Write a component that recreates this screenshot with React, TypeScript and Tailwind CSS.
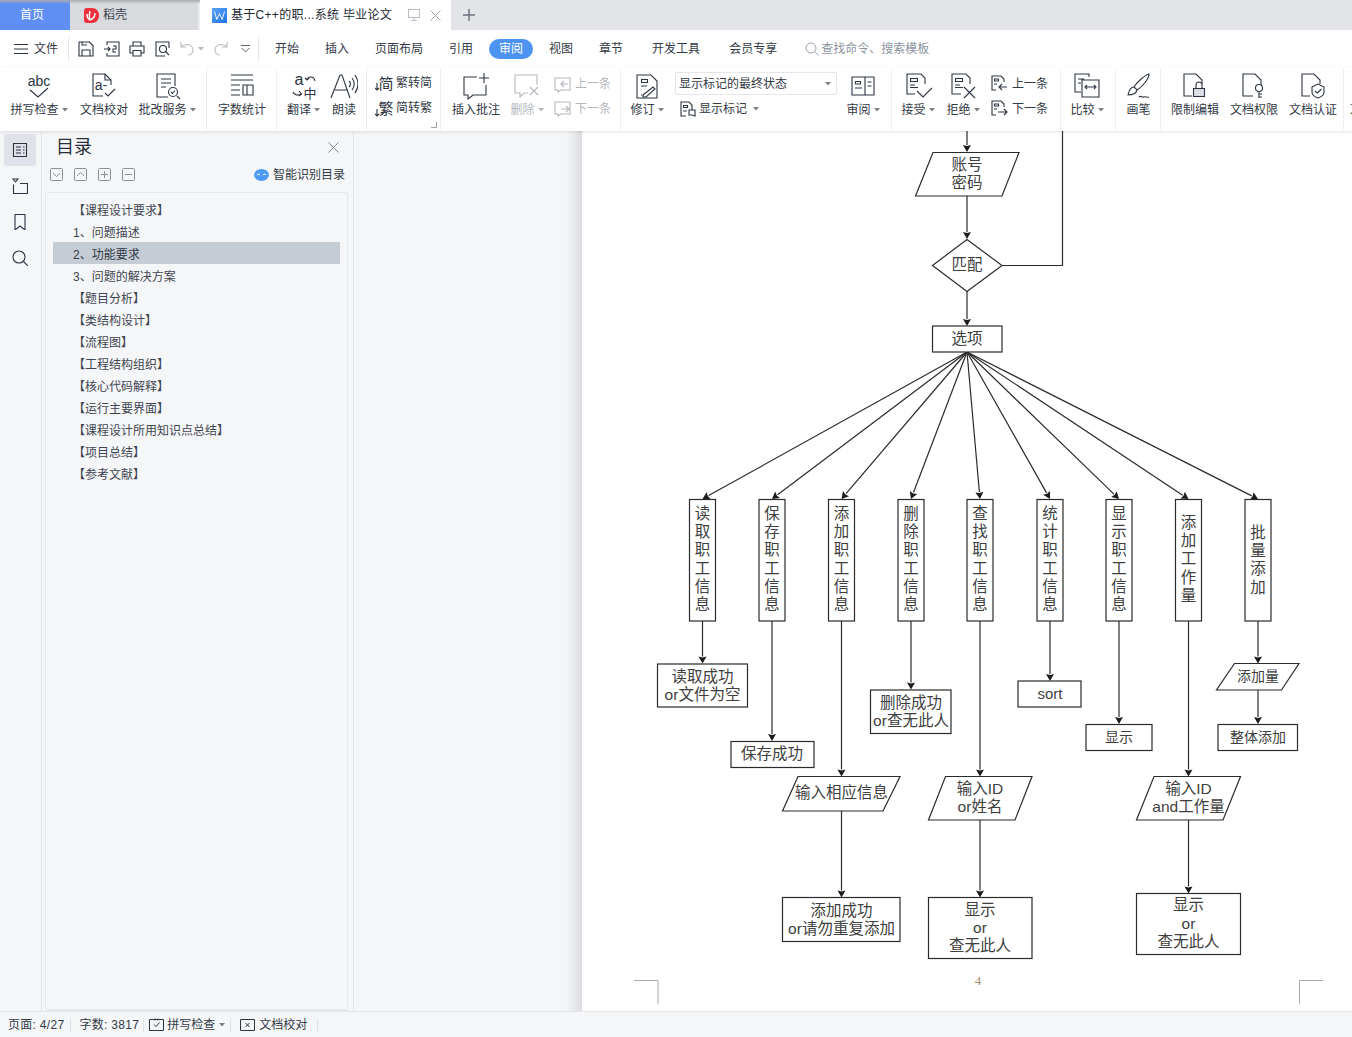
import type { ReactNode } from "react";

const INK = "#2d3442";
const MUTED = "#b4b7bd";

function Caret({ muted }: { muted?: boolean }) {
  return (
    <svg width="6" height="4" viewBox="0 0 6 4" className="ml-[3px] shrink-0">
      <path d="M0 0h6L3 3.5z" fill={muted ? MUTED : "#7a7f88"} />
    </svg>
  );
}

function Ico({ size = 28, children, color = INK }: { size?: number; children: ReactNode; color?: string }) {
  return (
    <svg width={size} height={size} viewBox={`0 0 ${size} ${size}`} fill="none" stroke={color} strokeWidth="1.1" className="block shrink-0">
      {children}
    </svg>
  );
}

// little marks that sit inside the review icons
function Marks({ x, y }: { x: number; y: number }) {
  return (
    <g transform={`translate(${x} ${y})`}>
      <rect x="0.5" y="0.5" width="7" height="3" />
      <path d="M0 7h5M0 9.5h8" />
    </g>
  );
}

function RibbonItem({ w, label, caret, muted, children }: { w: number; label: string; caret?: boolean; muted?: boolean; children: ReactNode }) {
  return (
    <div className="flex shrink-0 flex-col items-center" style={{ width: w }}>
      <div className="flex h-[28px] items-center justify-center">{children}</div>
      <div className={`mt-[1px] flex h-[18px] items-center whitespace-nowrap text-xs ${muted ? "text-[#b4b7bd]" : "text-[#333a46]"}`}>
        {label}
        {caret && <Caret muted={muted} />}
      </div>
    </div>
  );
}

function Group({ w, children, className = "" }: { w: number; children: ReactNode; className?: string }) {
  return (
    <div className={`relative flex h-[62px] shrink-0 border-r border-[#eceef0] pt-[4px] ${className}`} style={{ width: w }}>
      {children}
    </div>
  );
}

function SmallRow({ label, muted, caret, children }: { label: string; muted?: boolean; caret?: boolean; children: ReactNode }) {
  return (
    <div className={`flex h-[18px] items-center gap-[3px] whitespace-nowrap text-xs ${muted ? "text-[#b4b7bd]" : "text-[#333a46]"}`}>
      {children}
      {label}
      {caret && <Caret />}
    </div>
  );
}

function TabBar() {
  return (
    <div className="relative flex h-[30px] shrink-0 bg-[#e3e4e8] text-xs">
      <div className="flex w-[70px] items-center justify-center bg-[#5f8ff5] text-white">
        <span className="mr-[6px]">首页</span>
      </div>
      <div className="flex w-[130px] items-center border-r-2 border-[#eceded] bg-[#d9dade] pl-[14px] text-[#3d4450]">
        <svg width="15" height="15" viewBox="0 0 15 15" className="mr-[4px]">
          <path d="M0 3a3 3 0 0 1 3-3h5c4 0 7 3 7 7.500S12 15 8 15H3a3 3 0 0 1-3-3z" fill="#ee2f3c" />
          <path d="M6 3c-1 3-1 6 0 9M3 6c0 3 1 5 3 6M11 5c0 3-2 6-5 7" stroke="#fff" strokeWidth="1.5" fill="none" />
        </svg>
        稻壳
      </div>
      <div className="flex w-[251px] items-center bg-white pl-[12px] text-[#222833]">
        <svg width="15" height="15" viewBox="0 0 15 15" className="mr-[4px]">
          <defs>
            <linearGradient id="wps-w" x1="0" y1="0" x2="1" y2="1">
              <stop offset="0" stopColor="#5aa2f5" />
              <stop offset="1" stopColor="#1f74ea" />
            </linearGradient>
          </defs>
          <rect width="15" height="15" fill="url(#wps-w)" />
          <path d="M2.500 3.500l2.300 8 2.700-6 2.700 6 2.300-8" stroke="#fff" strokeWidth="0.9" fill="none" />
        </svg>
        <span className="tracking-[0.3px]">基于C++的职...系统 毕业论文</span>
        <svg width="12" height="12" viewBox="0 0 12 12" fill="none" stroke="#b8bcc3" className="ml-[16px]">
          <rect x="0.5" y="0.5" width="11" height="8" />
          <path d="M6 8.500V11M3.500 11.500h5" />
        </svg>
        <svg width="11" height="11" viewBox="0 0 11 11" fill="none" stroke="#a3a7ae" className="ml-[10px]">
          <path d="M.5.5l10 10M10.500.5l-10 10" />
        </svg>
      </div>
      <div className="ml-[12px] flex items-center">
        <svg width="12" height="12" viewBox="0 0 12 12" stroke="#6b717b" strokeWidth="1.4">
          <path d="M6 0v12M0 6h12" />
        </svg>
      </div>
      {/* window shadow that falls over the inactive tabs */}
      <div className="absolute left-0 top-0 h-[4px] w-[200px] bg-gradient-to-b from-[#a9abb2] to-transparent" />
    </div>
  );
}

function MenuRow() {
  const gray = "#b9bcc2";
  return (
    <div className="flex h-[37px] shrink-0 items-center bg-white text-xs text-[#333a46]">
      <svg width="14" height="10" viewBox="0 0 14 10" stroke={INK} className="ml-[14px]">
        <path d="M0 .5h14M0 5h14M0 9.500h14" />
      </svg>
      <span className="ml-[6px]">文件</span>
      <div className="ml-[10px] h-[24px] w-px bg-[#e4e6e9]" />
      <div className="ml-[9px] flex items-center">
        <Ico size={16}>
          <path d="M1 1h10.500L15 4.500V15H1zM4 15V9h8v6M4 1v3h5" />
        </Ico>
        <div className="ml-[10px]">
          <Ico size={16}>
            <path d="M3 4V1h12v14H3v-3M0 8h6M4 6l2 2-2 2M9 5h3v3H9v3h3" />
          </Ico>
        </div>
        <div className="ml-[9px]">
          <Ico size={16}>
            <path d="M4 5V1h8v4M4 12H1V5h14v7h-3M4 9.500h8V15H4z" />
          </Ico>
        </div>
        <div className="ml-[10px]">
          <Ico size={16}>
            <path d="M14 7V1H1v14h9" />
            <circle cx="8" cy="8" r="3.5" />
            <path d="M10.500 10.500L14 14" />
          </Ico>
        </div>
        <div className="ml-[9px]">
          <Ico size={15} color={gray}>
            <path d="M1 1v5h5M1 6c3-4 12-3 12 3 0 3-2 5-5 5" />
          </Ico>
        </div>
        <Caret muted />
        <div className="ml-[9px]">
          <Ico size={15} color={gray}>
            <path d="M14 1v5H9M14 6C11 2 2 3 2 9c0 3 2 5 5 5" />
          </Ico>
        </div>
        <svg width="9" height="8" viewBox="0 0 9 8" fill="none" stroke="#5f6570" className="ml-[13px]">
          <path d="M0 .5h9M.5 3l4 4 4-4" />
        </svg>
      </div>
      <div className="ml-[8px] h-[24px] w-px bg-[#e4e6e9]" />
      <span className="ml-[16px]">开始</span>
      <span className="ml-[26px]">插入</span>
      <span className="ml-[26px]">页面布局</span>
      <span className="ml-[26px]">引用</span>
      <span className="ml-[16px] flex h-[20px] w-[44px] items-center justify-center rounded-full bg-[#4d94f2] text-white">审阅</span>
      <span className="ml-[16px]">视图</span>
      <span className="ml-[26px]">章节</span>
      <span className="ml-[29px]">开发工具</span>
      <span className="ml-[29px]">会员专享</span>
      <svg width="14" height="14" viewBox="0 0 14 14" fill="none" stroke="#98a0ad" className="ml-[28px]">
        <circle cx="6" cy="6" r="5" />
        <path d="M9.500 9.500L13.500 13.500" />
      </svg>
      <span className="ml-[2px] text-[#8d94a1]">查找命令、搜索模板</span>
    </div>
  );
}

function Ribbon() {
  const g = MUTED;
  return (
    <div className="relative z-10 flex h-[64px] shrink-0 bg-white pt-[1px] shadow-[0_1px_3px_rgba(0,0,0,0.12)]">
      <Group w={207}>
        <RibbonItem w={78} label="拼写检查" caret>
          <Ico>
            <text x="14" y="14" textAnchor="middle" fontSize="14" fill={INK} stroke="none">abc</text>
            <path d="M5 18l8 7 10-9" />
          </Ico>
        </RibbonItem>
        <RibbonItem w={52} label="文档校对">
          <Ico>
            <path d="M21 13V8l-6-6H3v22h10" />
            <path d="M15 2v6h6" />
            <text x="11" y="18" textAnchor="middle" fontSize="14" fill={INK} stroke="none">a-</text>
            <path d="M15 21l3 3 7-7" />
          </Ico>
        </RibbonItem>
        <RibbonItem w={74} label="批改服务" caret>
          <Ico>
            <path d="M22 14V2H4v23h11" />
            <path d="M8 7h10M8 11h10M8 15h5" />
            <circle cx="20" cy="20" r="4.5" />
            <path d="M18 20l1.500 1.500 2.500-3M24 24l3 3" />
          </Ico>
        </RibbonItem>
      </Group>
      <Group w={70}>
        <RibbonItem w={70} label="字数统计">
          <Ico>
            <path d="M3 3h22M3 8h22M3 13h9M3 18h9M3 23h9M15 13h4v10h-4zM19 13h6v10h-6z" />
          </Ico>
        </RibbonItem>
      </Group>
      <Group w={90} className="pl-[4px]">
        <RibbonItem w={45} label="翻译" caret>
          <Ico>
            <text x="9" y="13" textAnchor="middle" fontSize="16" fill={INK} stroke="none">a</text>
            <path d="M17 7c2-3 7-3 8 2M15 6l2 2 2-2M3 20c1 3 5 4 8 2M9 19l2.500 3L9 24" />
            <text x="20" y="26" textAnchor="middle" fontSize="13" fill={INK} stroke="none">中</text>
          </Ico>
        </RibbonItem>
        <RibbonItem w={36} label="朗读">
          <Ico>
            <path d="M1 26L10 3h2l8 23M5 18h12M19 9c2 2 2 4 0 6M22 6c3 4 3 8 0 12M25 3c4 6 4 12 0 18" />
          </Ico>
        </RibbonItem>
      </Group>
      <Group w={74} className="flex-col pl-[8px] !pt-[2px]">
        <div className="flex h-[25px] items-center gap-[3px] text-xs text-[#333a46]">
          <Ico size={18}>
            <text x="11" y="14.5" textAnchor="middle" fontSize="15" fill={INK} stroke="none">简</text>
            <path d="M2 9v7M0 14l2 2 2-2" />
          </Ico>
          繁转简
        </div>
        <div className="flex h-[25px] items-center gap-[3px] text-xs text-[#333a46]">
          <Ico size={18}>
            <text x="11" y="14.5" textAnchor="middle" fontSize="15" fill={INK} stroke="none">繁</text>
            <path d="M2 10v7M0 15l2 2 2-2" />
          </Ico>
          简转繁
        </div>
        <svg width="6" height="6" viewBox="0 0 6 6" fill="none" stroke="#9aa0a8" className="absolute bottom-[2px] right-[3px]">
          <path d="M0 5.500h5.500V0" />
        </svg>
      </Group>
      <Group w={180}>
        <RibbonItem w={70} label="插入批注">
          <Ico>
            <path d="M15 5H2v18h4v4l5-4h13V13M22 1v10M17 6h10" />
          </Ico>
        </RibbonItem>
        <RibbonItem w={32} label="删除" caret muted>
          <Ico color={g}>
            <path d="M24 13V3H2v18h5v4l4-4h4M17 15l8 8M25 15l-8 8" />
          </Ico>
        </RibbonItem>
        <div className="ml-[11px] flex flex-col gap-[7px] pt-[3px]">
          <SmallRow label="上一条" muted>
            <Ico size={18} color={g}>
              <path d="M1 3h15v12H7l-3 2v-2H1zM14 9H7M10 6L7 9l3 3" />
            </Ico>
          </SmallRow>
          <SmallRow label="下一条" muted>
            <Ico size={18} color={g}>
              <path d="M1 2h15v12H7l-3 2v-2H1zM7 9h8M12 6l3 3-3 3" />
            </Ico>
          </SmallRow>
        </div>
      </Group>
      <Group w={271}>
        <RibbonItem w={52} label="修订" caret>
          <Ico>
            <path d="M4 3h14l6 6v17H4z" />
            <rect x="8.5" y="7.5" width="6" height="3" />
            <path d="M8 14h6M10 23l10-8 2 2-9 8h-3zM8 23h1" />
          </Ico>
        </RibbonItem>
        <div className="ml-[2px] flex w-[162px] flex-col">
          <div className="flex h-[23px] items-center justify-between rounded-[2px] border border-[#e5e7ea] pl-[3px] pr-[5px] text-xs text-[#333a46]">
            显示标记的最终状态
            <Caret />
          </div>
          <div className="mt-[5px] pl-[5px]">
            <SmallRow label="显示标记" caret>
              <Ico size={16}>
                <path d="M12 9V4L9 1H1v14h5M3.500 4.500h4v2h-4zM3 10h4M9 9h6v6l-3-1H9z" />
              </Ico>
            </SmallRow>
          </div>
        </div>
        <RibbonItem w={52} label="审阅" caret>
          <Ico>
            <path d="M3 5h22v18H3zM16 5v18M6.500 9.500h5v2.500h-5zM6 16h7M18.500 10h4M18.500 14h4" />
          </Ico>
        </RibbonItem>
      </Group>
      <Group w={169}>
        <RibbonItem w={52} label="接受" caret>
          <Ico>
            <path d="M21 12V6l-4-4H3v20h8" />
            <Marks x={6} y={6} />
            <path d="M13 19l6 6 9-9" />
          </Ico>
        </RibbonItem>
        <RibbonItem w={38} label="拒绝" caret>
          <Ico>
            <path d="M21 12V6l-4-4H3v20h9" />
            <Marks x={6} y={6} />
            <path d="M15 15l11 11M26 15L15 26" />
          </Ico>
        </RibbonItem>
        <div className="ml-[9px] flex flex-col gap-[7px] pt-[3px]">
          <SmallRow label="上一条">
            <Ico size={18}>
              <path d="M13 7V4l-3-3H1v14h4M3.500 4h4v2h-4zM3 9h3M16 12H8M11 9l-3 3 3 3" />
            </Ico>
          </SmallRow>
          <SmallRow label="下一条">
            <Ico size={18}>
              <path d="M13 7V4l-3-3H1v14h4M3.500 4h4v2h-4zM3 9h3M7 12h9M13 9l3 3-3 3" />
            </Ico>
          </SmallRow>
        </div>
      </Group>
      <Group w={55}>
        <RibbonItem w={52} label="比较" caret>
          <Ico>
            <path d="M16 5V2H2v18h6M5 7h6M5 11h3M9 8h17v17H9zM13 15h9M21 13l2 2-2 2M14 13l-2 2 2 2" />
          </Ico>
        </RibbonItem>
      </Group>
      <Group w={45}>
        <RibbonItem w={45} label="画笔">
          <Ico>
            <path d="M24 2c-4 1-12 8-15 13l3 3c5-3 12-11 12-16zM9 15c-3 0-5 3-6 8 3 0 8-1 9-5M14 25c2-2 3 1 5 0s3 1 5 0" />
          </Ico>
        </RibbonItem>
      </Group>
      <Group w={183} className="pl-[4px]">
        <RibbonItem w={60} label="限制编辑">
          <Ico>
            <path d="M11 24H3V2h12l6 6v4" />
            <rect x="12.5" y="16.5" width="11" height="8" fill="#dcdfe3" />
            <path d="M15 16v-3a3 3 0 0 1 6 0v3" />
          </Ico>
        </RibbonItem>
        <RibbonItem w={58} label="文档权限">
          <Ico>
            <path d="M13 24H3V2h12l6 6v5" />
            <circle cx="19" cy="16" r="3.5" />
            <path d="M19 19.500V26M19 22h3M19 25h3" />
          </Ico>
        </RibbonItem>
        <RibbonItem w={60} label="文档认证">
          <Ico>
            <path d="M11 24H3V2h12l6 6v4" />
            <path d="M13 15l6-3 6 3v5c0 3-3 5-6 6-3-1-6-3-6-6zM16 19l2.500 2 4-4" />
          </Ico>
        </RibbonItem>
      </Group>
      <div className="ml-[6px] pt-[33px] text-xs text-[#333a46]">文</div>
    </div>
  );
}

const tocItems = [
  "【课程设计要求】",
  "1、问题描述",
  "2、功能要求",
  "3、问题的解决方案",
  "【题目分析】",
  "【类结构设计】",
  "【流程图】",
  "【工程结构组织】",
  "【核心代码解释】",
  "【运行主要界面】",
  "【课程设计所用知识点总结】",
  "【项目总结】",
  "【参考文献】",
];

function Rail() {
  return (
    <div className="flex w-[42px] shrink-0 flex-col items-center gap-[4px] border-r border-[#e3e5e9] pr-px pt-[3px]">
      <div className="flex h-[32px] w-[32px] items-center justify-center rounded-[2px] bg-[#dfe2e8]">
        <Ico size={16}>
          <path d="M1.500 1.500h13v13h-13zM4 5h5M4 8h5M4 11h5M11 5h1.500M11 8h1.500M11 11h1.500" />
        </Ico>
      </div>
      <div className="flex h-[32px] w-[32px] items-center justify-center">
        <Ico size={16}>
          <path d="M1 1h5L3.500 4zM1.500 6.500v9h14v-10H8" />
        </Ico>
      </div>
      <div className="flex h-[32px] w-[32px] items-center justify-center">
        <Ico size={16}>
          <path d="M3 .5h10V16l-5-4-5 4z" />
        </Ico>
      </div>
      <div className="flex h-[32px] w-[32px] items-center justify-center">
        <Ico size={16}>
          <circle cx="7" cy="7" r="6" />
          <path d="M11.500 11.500L16 16" />
        </Ico>
      </div>
    </div>
  );
}

function TinyBox({ d }: { d: string }) {
  return (
    <svg width="13" height="13" viewBox="0 0 13 13" fill="none" stroke="#8b9098">
      <rect x=".5" y=".5" width="12" height="12" rx="1" />
      <path d={d} />
    </svg>
  );
}

function Sidebar() {
  return (
    <div className="flex w-[312px] shrink-0 flex-col border-r border-[#e3e5e9] pl-[3px] pr-[5px]">
      <div className="relative flex h-[33px] items-center pl-[11px] text-[18px] text-[#2a303b]">
        目录
        <svg width="11" height="11" viewBox="0 0 11 11" fill="none" stroke="#82878f" className="absolute right-[9px] top-[11px]">
          <path d="M.5.5l10 10M10.500.5l-10 10" />
        </svg>
      </div>
      <div className="flex h-[21px] items-center pl-[5px] pr-[3px]">
        <div className="flex gap-[11px]">
          <TinyBox d="M3 5l3.500 3.500L10 5" />
          <TinyBox d="M3 8l3.500-3.500L10 8" />
          <TinyBox d="M3 6.500h7M6.500 3v7" />
          <TinyBox d="M3 6.500h7" />
        </div>
        <div className="ml-auto flex items-center text-xs text-[#333a46]">
          <svg width="15" height="12" viewBox="0 0 15 12" className="mr-[4px]">
            <ellipse cx="7.5" cy="6" rx="7.5" ry="6" fill="#4d9bf5" />
            <path d="M3 6l1.500-1L6 6M9 6l1.500-1L12 6" stroke="#fff" fill="none" />
          </svg>
          智能识别目录
        </div>
      </div>
      <div className="mt-[7px] flex-1 rounded-[2px] border border-b-2 border-[#e6e8ec] px-[7px] pt-[5px]">
        {tocItems.map((t) => (
          <div
            key={t}
            className={`flex h-[22px] items-center pl-[20px] pt-[4px] text-xs ${t.startsWith("2") ? "bg-[#c5ccd3] text-[#333a46]" : "text-[#3f4551]"}`}
          >
            {t}
          </div>
        ))}
      </div>
    </div>
  );
}

type Txt = { t: string; x: number; y: number; s?: number };

function Label({ t, x, y, s = 15.5 }: Txt) {
  return (
    <text x={x} y={y - 0.8} fontSize={s} textAnchor="middle" dominantBaseline="central" fill="#404040" stroke="none">
      {t}
    </text>
  );
}

function Arrow({ x1, y1, x2, y2 }: { x1: number; y1: number; x2: number; y2: number }) {
  const len = Math.hypot(x2 - x1, y2 - y1);
  const ux = (x2 - x1) / len;
  const uy = (y2 - y1) / len;
  const bx = x2 - ux * 7;
  const by = y2 - uy * 7;
  const head = `${x2},${y2} ${bx - uy * 4},${by + ux * 4} ${bx + ux},${by + uy} ${bx + uy * 4},${by - ux * 4}`;
  return (
    <g>
      <line x1={x1} y1={y1} x2={bx} y2={by} />
      <polygon points={head} fill="#1c1c1c" stroke="none" />
    </g>
  );
}

const columns = [
  { x: 702.5, chars: "读取职工信息" },
  { x: 772, chars: "保存职工信息" },
  { x: 841.5, chars: "添加职工信息" },
  { x: 911, chars: "删除职工信息" },
  { x: 980, chars: "查找职工信息" },
  { x: 1050, chars: "统计职工信息" },
  { x: 1119, chars: "显示职工信息" },
  { x: 1188.5, chars: "添加工作量" },
  { x: 1258, chars: "批量添加" },
];

const rects = [
  [932.5, 326, 69.5, 26],
  [657.5, 664, 90, 43],
  [731, 741.5, 83, 26],
  [870.5, 690, 80.5, 43.5],
  [1018, 681, 63, 26],
  [1086, 724.5, 66, 26],
  [1218, 724.5, 79.5, 26],
  [782.5, 897.5, 117.5, 44],
  [928.5, 897.5, 103.5, 61],
  [1136.5, 893.5, 104, 61],
];

const paras = [
  "933,152.5 1019,152.5 1002,196 915.5,196",
  "798,776.5 900,776.5 883,811 782.5,811",
  "945.5,776.5 1032,776.5 1015,820 928.5,820",
  "1154,776.5 1240.5,776.5 1223,820 1136.5,820",
  "1234.5,663.5 1299,663.5 1281.5,690 1216.5,690",
];

const arrows = [
  [967, 131, 967, 152],
  [967, 196, 967, 239],
  [967, 291, 967, 326],
  [702.5, 621, 702.5, 663.5],
  [772, 621, 772, 741],
  [841.5, 621, 841.5, 776.5],
  [911, 621, 911, 689.5],
  [980, 621, 980, 776.5],
  [1050, 621, 1050, 681],
  [1119, 621, 1119, 724],
  [1188.5, 621, 1188.5, 776.5],
  [1258, 621, 1258, 663.5],
  [1258, 690, 1258, 724],
  [841.5, 811, 841.5, 897.5],
  [980, 820, 980, 897.5],
  [1188.5, 820, 1188.5, 893.5],
];

const labels: Txt[] = [
  { t: "账号", x: 967, y: 165 },
  { t: "密码", x: 967, y: 183 },
  { t: "匹配", x: 967, y: 265 },
  { t: "选项", x: 967, y: 339 },
  { t: "读取成功", x: 702.5, y: 677 },
  { t: "or文件为空", x: 702.5, y: 695 },
  { t: "保存成功", x: 772, y: 754.5 },
  { t: "删除成功", x: 911, y: 703 },
  { t: "or查无此人", x: 911, y: 721 },
  { t: "sort", x: 1050, y: 694, s: 15 },
  { t: "显示", x: 1119, y: 737.5, s: 14 },
  { t: "添加量", x: 1258, y: 677, s: 14 },
  { t: "整体添加", x: 1258, y: 737.5, s: 14 },
  { t: "输入相应信息", x: 841.5, y: 793 },
  { t: "添加成功", x: 841.5, y: 911 },
  { t: "or请勿重复添加", x: 841.5, y: 929 },
  { t: "输入ID", x: 980, y: 789.5 },
  { t: "or姓名", x: 980, y: 807.5 },
  { t: "显示", x: 980, y: 910 },
  { t: "or", x: 980, y: 928 },
  { t: "查无此人", x: 980, y: 946.5 },
  { t: "输入ID", x: 1188.5, y: 789.5 },
  { t: "and工作量", x: 1188.5, y: 807.5 },
  { t: "显示", x: 1188.5, y: 905.5 },
  { t: "or", x: 1188.5, y: 924 },
  { t: "查无此人", x: 1188.5, y: 942.5 },
];

// start y of the stacked characters in each tall box
function columnY(n: number) {
  if (n === 6) return 514;
  if (n === 5) return 523;
  return 533;
}

function Flowchart() {
  return (
    <svg width="770" height="880" viewBox="582 131 770 880" className="block" fill="none" stroke="#2b2b2b" strokeWidth="1.2">
      {arrows.map(([x1, y1, x2, y2], i) => (
        <Arrow key={i} x1={x1} y1={y1} x2={x2} y2={y2} />
      ))}
      <path d="M1002 265.5H1062.5V131" />
      <polygon points="932.5,265.5 967,239.5 1002,265.5 967,291.5" fill="#fff" />
      {columns.map((c) => (
        <g key={c.x}>
          <Arrow x1={967} y1={352} x2={c.x} y2={499} />
          <rect x={c.x - 13} y={499.5} width={26} height={121.5} fill="#fff" />
          {[...c.chars].map((ch, i) => (
            <Label key={i} t={ch} x={c.x} y={columnY(c.chars.length) + i * 18.3} />
          ))}
        </g>
      ))}
      {rects.map(([x, y, w, h], i) => (
        <rect key={i} x={x} y={y} width={w} height={h} fill="#fff" />
      ))}
      {paras.map((p) => (
        <polygon key={p} points={p} fill="#fff" />
      ))}
      {labels.map((l, i) => (
        <Label key={i} {...l} />
      ))}
      <text x="978" y="984.5" fontSize="13" textAnchor="middle" fill="#a58d72" stroke="none" className="font-['Liberation_Serif',serif]">4</text>
      <path d="M634 980.5H658V1004M1323 980.5H1299.5V1004" stroke="#a8a8a8" strokeWidth="1" />
    </svg>
  );
}

function StatusBar() {
  return (
    <div className="flex h-[26px] shrink-0 items-center border-t border-[#e3e5e9] bg-[#f5f6f8] pl-[8px] text-xs text-[#333a46]">
      <span className="tracking-[0.3px]">页面: 4/27</span>
      <div className="mx-[6px] h-[14px] w-px bg-[#e0e2e6]" />
      <span className="ml-[2px] tracking-[0.3px]">字数: 3817</span>
      <div className="ml-[4px] h-[14px] w-px bg-[#e0e2e6]" />
      <svg width="15" height="14" viewBox="0 0 15 14" fill="none" stroke={INK} className="ml-[5px] mr-[3px]">
        <path d="M.5 1.500h14v11h-14zM5 6.500l2 2 3.500-4M6 .5v2M9 .5v2" />
      </svg>
      拼写检查
      <span className="ml-[1px] w-[9px]"><Caret /></span>
      <div className="ml-[5px] h-[14px] w-px bg-[#e0e2e6]" />
      <svg width="15" height="14" viewBox="0 0 15 14" fill="none" stroke={INK} className="ml-[9px] mr-[4px]">
        <path d="M.5 1.500h14v11h-14zM5.500 5l4 4M9.500 5l-4 4" />
      </svg>
      文档校对
      <div className="ml-[10px] h-[14px] w-px bg-[#e0e2e6]" />
    </div>
  );
}

export default function App() {
  return (
    <div className="flex h-[1037px] w-[1352px] flex-col overflow-hidden bg-[#f5f6f8] font-['Liberation_Sans','Noto_Sans_CJK_SC',sans-serif]">
      <TabBar />
      <MenuRow />
      <Ribbon />
      <div className="flex min-h-0 flex-1">
        <Rail />
        <Sidebar />
        <div className="flex w-[228px] shrink-0 justify-end bg-[#f5f6f8]">
          <div className="w-[16px] bg-gradient-to-r from-transparent to-[#dcdde0]" />
        </div>
        <div className="flex-1 bg-white">
          <Flowchart />
        </div>
      </div>
      <StatusBar />
    </div>
  );
}
